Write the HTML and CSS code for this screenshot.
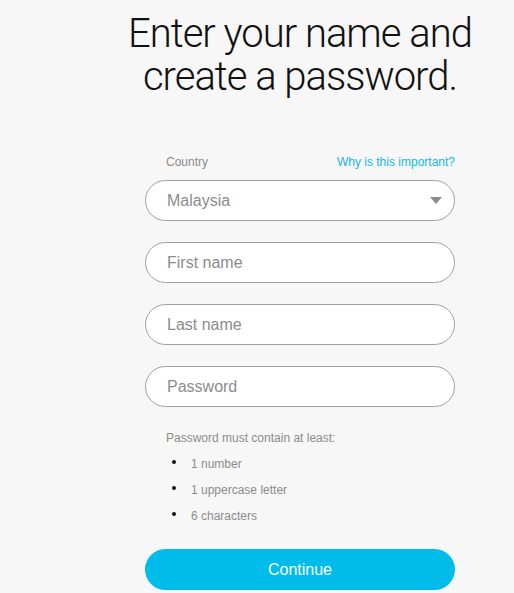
FILE: index.html
```html
<!DOCTYPE html>
<html lang="en">
<head>
<meta charset="utf-8">
<title>Enter your name and create a password</title>
<link rel="stylesheet" href="styles.css">
</head>
<body>
<main class="page">
  <h1 class="title">Enter your name and<br>create a password.</h1>
  <form class="form">
    <div class="label-row">
      <span class="label">Country</span>
      <a class="why" href="#">Why is this important?</a>
    </div>
    <div class="field select">
      <span class="value">Malaysia</span>
      <svg class="caret" width="12" height="7" viewBox="0 0 12 7"><path d="M0 0H12L6 7Z" fill="#8c8c8c"/></svg>
    </div>
    <div class="field"><span class="placeholder">First name</span></div>
    <div class="field"><span class="placeholder">Last name</span></div>
    <div class="field"><span class="placeholder">Password</span></div>
    <p class="rules-title">Password must contain at least:</p>
    <ul class="rules">
      <li>1 number</li>
      <li>1 uppercase letter</li>
      <li>6 characters</li>
    </ul>
    <button type="button" class="continue">Continue</button>
  </form>
</main>
</body>
</html>
```
FILE: styles.css
```css
html, body {
  margin: 0;
  padding: 0;
  background: #f7f7f7;
}
body {
  font-family: "Liberation Sans", Arial, sans-serif;
  color: #222;
}
.page {
  width: 310px;
  margin-left: 145px;
  padding-top: 12px;
}
.title {
  margin: 0 -60px;
  text-align: center;
  font-family: Roboto, "Liberation Sans", sans-serif;
  font-weight: 300;
  font-size: 40px;
  letter-spacing: -1px;
  line-height: 43px;
  color: #111;
}
.form {
  margin-top: 57px;
  display: flex;
  flex-direction: column;
}
.label-row {
  display: flex;
  justify-content: space-between;
  align-items: baseline;
  padding-left: 21px;
  height: 25px;
}
.label {
  font-size: 12px;
  color: #8c8c8c;
}
.why {
  font-size: 12px;
  color: #14b8e0;
  text-decoration: none;
}
.field {
  box-sizing: border-box;
  height: 41px;
  border: 1px solid #a0a0a0;
  border-radius: 21px;
  background: #fff;
  display: flex;
  align-items: center;
  padding: 0 21px;
  font-size: 16px;
  color: #8c8c8c;
  margin-bottom: 21px;
}
.select {
  justify-content: space-between;
  padding-right: 12px;
}
.caret {
  display: block;
}
.rules-title {
  margin: 3px 0 0 21px;
  font-size: 12px;
  color: #8c8c8c;
}
.rules {
  margin: 12px 0 0 0;
  padding: 0 0 0 46px;
  list-style: none;
}
.rules li {
  position: relative;
  font-size: 12px;
  color: #8c8c8c;
  height: 26px;
}
.rules li::before {
  content: "";
  position: absolute;
  left: -19px;
  top: 3px;
  width: 4px;
  height: 4px;
  border-radius: 50%;
  background: #111;
}
.continue {
  margin-top: 14px;
  height: 41px;
  border: none;
  border-radius: 21px;
  background: #00bceb;
  color: #fff;
  font-family: "Liberation Sans", Arial, sans-serif;
  font-size: 16px;
}
```
